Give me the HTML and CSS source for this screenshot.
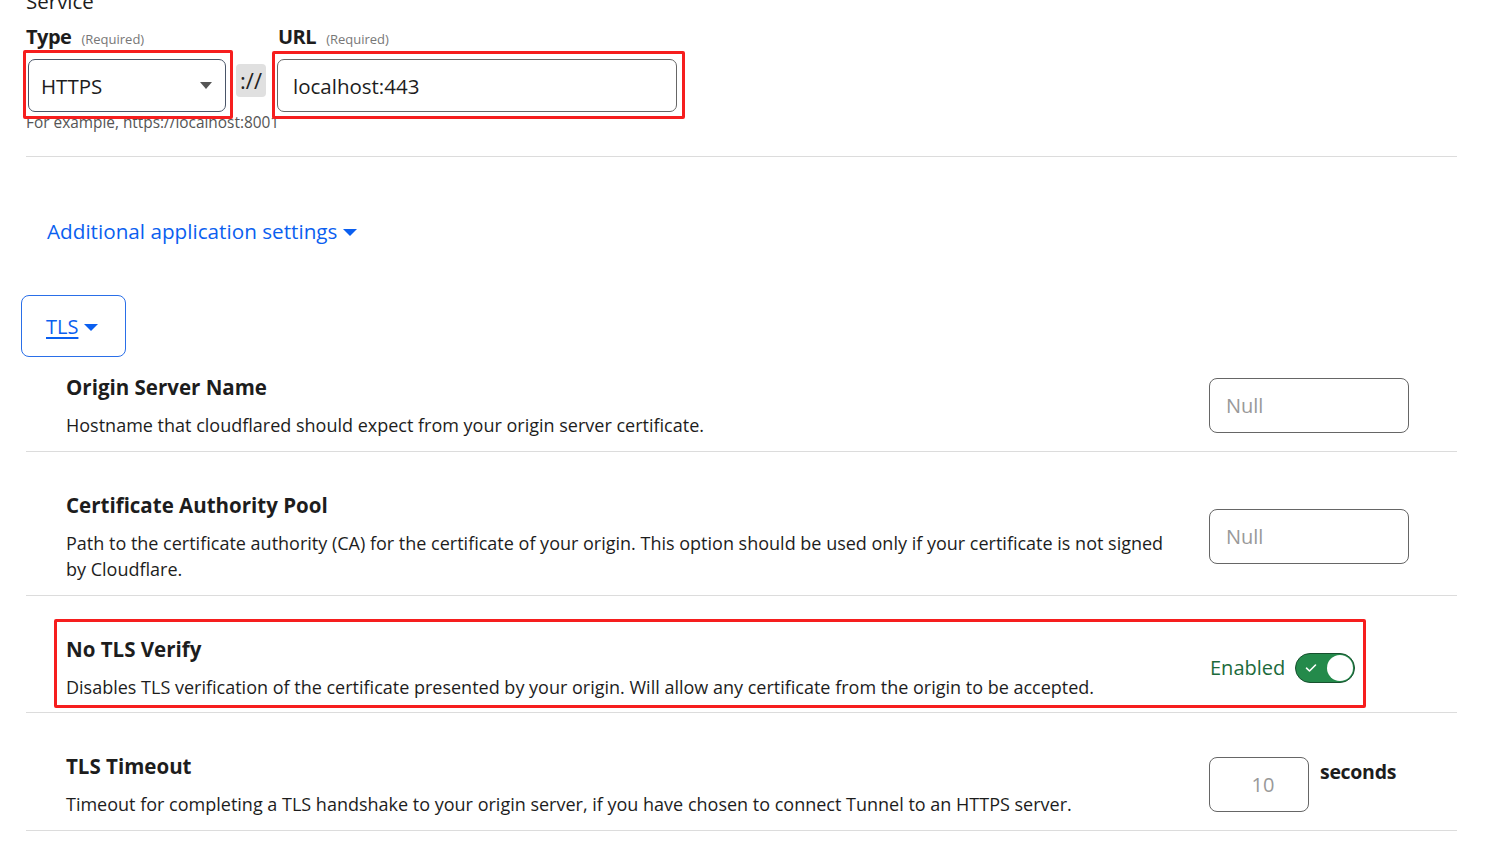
FILE: index.html
```html
<!DOCTYPE html>
<html lang="en">
<head>
<meta charset="utf-8">
<title>Service</title>
<link rel="stylesheet" href="styles.css">
</head>
<body>
<div class="page">
  <div class="service-title">Service</div>
  <div class="service-fields">
    <div class="field type-field">
      <div class="label"><span class="label-name">Type</span><span class="req">(Required)</span></div>
      <div class="select">
        <span>HTTPS</span>
        <span class="select-caret"></span>
      </div>
      <div class="annot annot-type"></div>
    </div>
    <div class="sep">://</div>
    <div class="field url-field">
      <div class="label"><span class="label-name">URL</span><span class="req">(Required)</span></div>
      <div class="input url-input">localhost:443</div>
      <div class="annot annot-url"></div>
    </div>
  </div>
  <div class="hint">For example, https://localhost:8001</div>
  <hr class="divider top-divider">

  <div class="additional"><span class="link">Additional application settings</span><span class="caret-blue"></span></div>

  <div class="tls-btn"><span class="tls-text">TLS</span><span class="caret-blue small"></span></div>

  <div class="row first">
    <div class="row-text">
      <div class="row-title">Origin Server Name</div>
      <div class="row-desc">Hostname that cloudflared should expect from your origin server certificate.</div>
    </div>
    <div class="row-control"><div class="text-input">Null</div></div>
  </div>
  <hr class="divider">

  <div class="row">
    <div class="row-text">
      <div class="row-title">Certificate Authority Pool</div>
      <div class="row-desc">Path to the certificate authority (CA) for the certificate of your origin. This option should be used only if your certificate is not signed by Cloudflare.</div>
    </div>
    <div class="row-control"><div class="text-input">Null</div></div>
  </div>
  <hr class="divider">

  <div class="row annotated">
    <div class="row-text">
      <div class="row-title">No TLS Verify</div>
      <div class="row-desc">Disables TLS verification of the certificate presented by your origin. Will allow any certificate from the origin to be accepted.</div>
    </div>
    <div class="row-control">
      <span class="enabled">Enabled</span>
      <span class="toggle">
        <svg class="check" width="12" height="10" viewBox="0 0 12 10"><path d="M1.5 5.2 L4.5 8 L10.5 2" fill="none" stroke="#fff" stroke-width="1.6" stroke-linecap="round" stroke-linejoin="round"/></svg>
        <span class="knob"></span>
      </span>
    </div>
    <div class="annot annot-row"></div>
  </div>
  <hr class="divider">

  <div class="row">
    <div class="row-text">
      <div class="row-title">TLS Timeout</div>
      <div class="row-desc">Timeout for completing a TLS handshake to your origin server, if you have chosen to connect Tunnel to an HTTPS server.</div>
    </div>
    <div class="row-control top">
      <div class="num-input">10</div>
      <span class="seconds">seconds</span>
    </div>
  </div>
  <hr class="divider">
</div>
</body>
</html>
```

FILE: styles.css
```css
* { box-sizing: border-box; }
html, body { margin: 0; padding: 0; background: #fff; }
body {
  font-family: "Open Sans", "Noto Sans", sans-serif;
  color: #1d1d1d;
  overflow: hidden;
  height: 842px;
}
.page {
  width: 1457px;
  padding-left: 26px;
  margin-top: -11px;
}
.service-title {
  font-size: 20.5px;
  line-height: 24px;
  height: 24px;
}
.service-fields {
  display: flex;
  align-items: flex-end;
  margin-top: 11px;
}
.field { position: relative; }
.label {
  display: flex;
  align-items: baseline;
  height: 26px;
  margin-bottom: 9px;
}
.label-name {
  font-weight: 700;
  font-size: 20px;
  line-height: 26px;
  letter-spacing: -0.5px;
}
.req {
  font-size: 13px;
  color: #777;
  margin-left: 10px;
}
.select {
  margin-left: 2px;
  width: 198px;
  height: 53px;
  border: 1px solid #4a5568;
  border-radius: 7px;
  display: flex;
  align-items: center;
  justify-content: space-between;
  padding: 0 13px 0 12px;
  font-size: 20.5px;
}
.select-caret {
  width: 0; height: 0;
  border-left: 6px solid transparent;
  border-right: 6px solid transparent;
  border-top: 7px solid #555;
}
.sep {
  width: 30px;
  height: 33px;
  margin: 0 11px 15px 10px;
  background: #e0e0e0;
  border-radius: 4px;
  font-size: 22px;
  line-height: 32px;
  text-align: center;
  color: #222;
}
.url-field .label { margin-left: 1px; }
.input.url-input {
  width: 400px;
  height: 53px;
  border: 1px solid #666;
  border-radius: 7px;
  display: flex;
  align-items: center;
  padding-left: 15px;
  font-size: 20.5px;
}
.hint {
  font-size: 15.4px;
  color: #555;
  margin-top: 2px;
  line-height: 18px;
}
.annot {
  position: absolute;
  border: 3px solid #f61e1e;
  border-radius: 2px;
  pointer-events: none;
}
.annot-type { left: -3px; top: 26px; width: 210px; height: 69px; }
.annot-url { left: -5px; top: 27px; width: 413px; height: 68px; }
.divider {
  border: 0;
  border-top: 1px solid #dcdcdc;
  margin: 0;
  width: 1431px;
}
.top-divider { margin-top: 24px; }
.additional {
  margin: 59px 0 0 21px;
  display: flex;
  align-items: center;
  height: 30px;
}
.link {
  color: #0b5ff0;
  font-size: 20.7px;
}
.caret-blue {
  width: 0; height: 0;
  border-left: 7px solid transparent;
  border-right: 7px solid transparent;
  border-top: 7px solid #0b5ff0;
  margin-left: 6px;
  margin-top: 2px;
}
.caret-blue.small { margin-left: 6px; border-left-width: 7.5px; border-right-width: 7.5px; }
.tls-btn {
  margin: 49px 0 0 -5px;
  width: 105px;
  height: 62px;
  border: 1px solid #2a6fe8;
  border-radius: 8px;
  display: flex;
  align-items: center;
  padding-left: 24px;
}
.tls-text {
  color: #0b5ff0;
  font-size: 20px;
  text-decoration: underline;
  text-underline-offset: 3px;
}
.row {
  position: relative;
  display: flex;
  align-items: center;
  padding: 39px 0 13px 40px;
}
.row.first { padding-top: 16px; }
.row.annotated { padding-bottom: 12px; }
.row-text { width: 1143px; padding-right: 23px; }
.row-title {
  font-weight: 700;
  font-size: 20.5px;
  line-height: 28px;
}
.row-desc {
  font-size: 18px;
  line-height: 26px;
  margin-top: 11px;
}
.row-control {
  display: flex;
  align-items: center;
}
.row-control.top { align-items: flex-start; }
.text-input {
  width: 200px;
  height: 55px;
  border: 1px solid #666;
  border-radius: 8px;
  font-size: 20px;
  color: #999;
  padding-left: 16px;
  display: flex;
  align-items: center;
}
.num-input {
  width: 100px;
  height: 55px;
  border: 1px solid #666;
  border-radius: 8px;
  font-size: 20px;
  color: #999;
  display: flex;
  align-items: center;
  justify-content: center;
  padding-left: 8px;
}
.seconds {
  font-weight: 700;
  font-size: 19.5px;
  margin-left: 11px;
  margin-top: 1px;
  letter-spacing: -0.3px;
}
.enabled {
  color: #1b6a3b;
  font-size: 20px;
  margin-left: 1px;
}
.toggle {
  position: relative;
  display: inline-flex;
  align-items: center;
  width: 60px;
  height: 30px;
  margin-left: 10px;
  background: #248a4b;
  border: 1px solid #17502e;
  border-radius: 15px;
}
.check { margin-left: 9px; }
.knob {
  position: absolute;
  right: 1px;
  top: 1px;
  width: 26px;
  height: 26px;
  border-radius: 50%;
  background: #fff;
}
.annot-row { left: 28px; top: 23px; width: 1312px; height: 89px; }
```
